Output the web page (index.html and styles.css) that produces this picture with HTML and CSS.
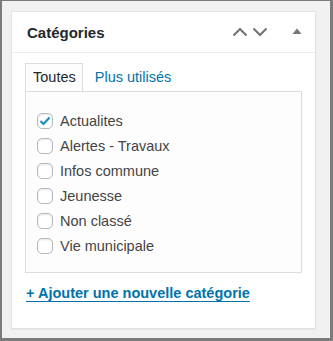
FILE: index.html
```html
<!DOCTYPE html>
<html lang="fr">
<head>
    <meta charset="UTF-8">
    <title>Catégories</title>
    <link rel="stylesheet" href="styles.css">
</head>
<body>
    <div class="frame">
        <div class="postbox">
            <div class="postbox-header">
                <h2>Catégories</h2>
                <div class="handle-actions">
                    <svg class="arrow" width="16" height="10" viewBox="0 0 16 10">
                        <path d="M1.5 8.5 L8 2 L14.5 8.5" fill="none" stroke="#72777c" stroke-width="2.2"/>
                    </svg>
                    <svg class="arrow" width="16" height="10" viewBox="0 0 16 10">
                        <path d="M1.5 1.5 L8 8 L14.5 1.5" fill="none" stroke="#72777c" stroke-width="2.2"/>
                    </svg>
                    <svg class="toggle" width="10" height="6" viewBox="0 0 10 6">
                        <path d="M0.5 6 L5 0.5 L9.5 6 Z" fill="#72777c"/>
                    </svg>
                </div>
            </div>
            <div class="inside">
                <ul class="tabs">
                    <li class="tab active">Toutes</li>
                    <li class="tab"><a href="#">Plus utilisés</a></li>
                </ul>
                <div class="tabs-panel">
                    <ul class="checklist">
                        <li><span class="cb checked"><svg width="12" height="10" viewBox="0 0 12 10"><path d="M1.5 5 L4.5 8 L10.5 1.5" fill="none" stroke="#1e8cbe" stroke-width="2.2"/></svg></span>Actualites</li>
                        <li><span class="cb"></span>Alertes - Travaux</li>
                        <li><span class="cb"></span>Infos commune</li>
                        <li><span class="cb"></span>Jeunesse</li>
                        <li><span class="cb"></span>Non classé</li>
                        <li><span class="cb"></span>Vie municipale</li>
                    </ul>
                </div>
                <a class="add-new" href="#">+ Ajouter une nouvelle catégorie</a>
            </div>
        </div>
    </div>
</body>
</html>
```

FILE: styles.css
```css
body {
    margin: 0;
    font-family: "Liberation Sans", Arial, sans-serif;
    color: #32373c;
}

.frame {
    width: 333px;
    height: 341px;
    box-sizing: border-box;
    background-color: #f1f1f1;
    border-style: solid;
    border-color: #7b7b7b;
    border-width: 1px 3px 3px 2px;
    padding: 10px 0 0 9px;
}

.postbox {
    width: 305px;
    height: 318px;
    box-sizing: border-box;
    background-color: #fff;
    border: 1px solid #e2e2e2;
    box-shadow: 0 1px 1px rgba(0, 0, 0, 0.04);
}

.postbox-header {
    display: flex;
    align-items: center;
    height: 40px;
    border-bottom: 1px solid #eee;
    padding: 0 13px 0 15px;
}

.postbox-header h2 {
    flex: 1;
    margin: 0;
    font-size: 15px;
    font-weight: 700;
    color: #23282d;
}

.handle-actions {
    display: flex;
    align-items: center;
    gap: 4px;
}

.handle-actions .toggle {
    margin-left: 20px;
    margin-bottom: 3px;
}

.inside {
    padding: 10px 13px 0 13px;
}

.tabs {
    display: flex;
    align-items: flex-end;
    list-style: none;
    margin: 0;
    padding: 0;
    font-size: 14.5px;
}

.tab {
    height: 27px;
    line-height: 27px;
    padding: 0 6px 0 7px;
    border: 1px solid transparent;
    border-bottom: none;
}

.tab.active {
    border-color: #ddd;
    background-color: #fdfdfd;
    color: #23282d;
}

.tab a {
    color: #0073aa;
    text-decoration: none;
    margin-left: 4px;
}

.tabs-panel {
    height: 182px;
    box-sizing: border-box;
    border: 1px solid #ddd;
    background-color: #fdfdfd;
    padding: 16px 13px 0 11px;
}

.checklist {
    list-style: none;
    margin: 0;
    padding: 0;
    font-size: 14.5px;
    color: #444;
}

.checklist li {
    display: flex;
    align-items: center;
    height: 25px;
}

.cb {
    width: 16px;
    height: 16px;
    box-sizing: border-box;
    border: 1px solid #b4b9be;
    border-radius: 5px;
    background-color: #fff;
    box-shadow: inset 0 1px 2px rgba(0, 0, 0, 0.1);
    margin-right: 7px;
    display: flex;
    align-items: center;
    justify-content: center;
}

.add-new {
    display: inline-block;
    margin-top: 12px;
    margin-left: 1px;
    font-size: 14.5px;
    font-weight: 700;
    color: #0073aa;
    text-decoration: underline;
    text-underline-offset: 3px;
}
```
